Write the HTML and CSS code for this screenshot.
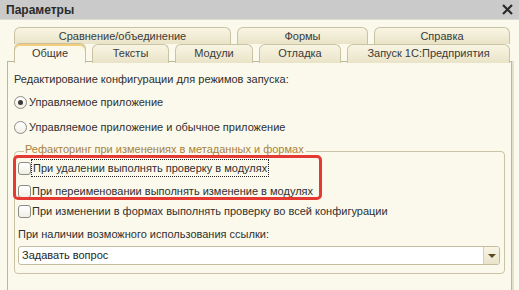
FILE: index.html
```html
<!DOCTYPE html>
<html lang="ru">
<head>
    <meta charset="UTF-8">
    <title>Параметры</title>
    <link rel="stylesheet" href="styles.css">
</head>
<body>
    <div class="titlebar">
        <span class="title">Параметры</span>
        <svg class="close" width="11" height="11" viewBox="0 0 11 11">
            <path d="M1 1 L10 10 M10 1 L1 10" stroke="#2b2b2b" stroke-width="2.2"/>
        </svg>
    </div>

    <!-- Tabs: two rows, the front row holds the active one -->
    <div class="tabs">
        <div class="tab-row back">
            <div class="tab">Сравнение/объединение</div>
            <div class="tab">Формы</div>
            <div class="tab">Справка</div>
        </div>
        <div class="tab-row front">
            <div class="tab active">Общие</div>
            <div class="tab">Тексты</div>
            <div class="tab">Модули</div>
            <div class="tab">Отладка</div>
            <div class="tab">Запуск 1С:Предприятия</div>
        </div>
    </div>

    <div class="panel">
        <div class="row caption">Редактирование конфигурации для режимов запуска:</div>
        <label class="row radio-row first">
            <span class="radio checked"></span>
            <span>Управляемое приложение</span>
        </label>
        <label class="row radio-row second">
            <span class="radio"></span>
            <span>Управляемое приложение и обычное приложение</span>
        </label>

        <div class="group">
            <div class="group-title">Рефакторинг при изменениях в метаданных и формах</div>
            <div class="highlight"></div>
            <label class="row check-row cb1">
                <span class="checkbox"></span>
                <span class="focused">При удалении выполнять проверку в модулях</span>
            </label>
            <label class="row check-row cb2">
                <span class="checkbox"></span>
                <span>При переименовании выполнять изменение в модулях</span>
            </label>
            <label class="row check-row cb3">
                <span class="checkbox"></span>
                <span>При изменении в формах выполнять проверку во всей конфигурации</span>
            </label>
            <div class="row ref-label">При наличии возможного использования ссылки:</div>
            <div class="combo">
                <span class="combo-value">Задавать вопрос</span>
                <span class="combo-button"><span class="arrow"></span></span>
            </div>
        </div>
    </div>
</body>
</html>
```

FILE: styles.css
```css
body {
    margin: 0;
    width: 519px;
    height: 290px;
    overflow: hidden;
    background: #fbf9ec;
    font-family: 'Liberation Sans', Arial, sans-serif;
    font-size: 11px;
    color: #2f2f2f;
}

/* Title bar */
.titlebar {
    height: 19px;
    background: #cacaca;
    border-bottom: 1px solid #dcdcd4;
    padding: 0 6px;
    display: flex;
    align-items: center;
    justify-content: space-between;
}
.title {
    font-size: 12px;
    font-weight: bold;
    color: #2a2a2a;
}

/* Tabs */
.tabs {
    padding: 7px 0 0 14px;
    margin-bottom: -1px;
}
.tab-row {
    display: grid;
    gap: 6px;
    height: 17px;
}
.tab-row.back {
    grid-template-columns: 217px 131px 136px;
}
.tab-row.front {
    grid-template-columns: 72px 77px 78px 82px 163px;
    height: 18px;
}
.tab {
    border: 1px solid #c9c3a4;
    border-bottom: none;
    border-radius: 6px 6px 0 0;
    background: linear-gradient(#f8f5e3, #e9e3c7);
    text-align: center;
    line-height: 16px;
    color: #3a3a3a;
}
.front .tab {
    line-height: 17px;
}
.tab.active {
    position: relative;
    margin-top: -1px;
    background: #fbf9ec;
    border-color: #c9c0a0;
    box-shadow: inset 0 2px 0 #f2cd7c;
    line-height: 19px;
}

/* Page panel */
.panel {
    margin-left: 7px;
    width: 491px;
    height: 220px;
    border: 1px solid #bcb69b;
    border-bottom: none;
    box-shadow: 2px 0 0 #e4e0cc;
    padding: 9px 6px 0 6px;
}
.row {
    display: flex;
    align-items: center;
    height: 16px;
    line-height: 16px;
    white-space: nowrap;
}
.radio-row.first { margin-top: 7px; }
.radio-row.second { margin-top: 9px; }

.radio {
    box-sizing: border-box;
    width: 13px;
    height: 13px;
    border: 1px solid #8c8c86;
    border-radius: 50%;
    background: linear-gradient(#ffffff, #f1efe4);
    margin-right: 2px;
    display: flex;
    align-items: center;
    justify-content: center;
}
.radio.checked::after {
    content: "";
    width: 5px;
    height: 5px;
    border-radius: 50%;
    background: #3a3a3a;
}

/* Group box */
.group {
    position: relative;
    margin-top: 16px;
    padding: 0 4px 8px 3px;
    border: 1px solid #c9c3a8;
    border-radius: 4px;
}
.group-title {
    display: table;
    margin: -11px 0 0 6px;
    padding: 0 2px 0 1px;
    line-height: 16px;
    background: #fbf9ec;
    color: #a8823f;
}
.highlight {
    position: absolute;
    left: -2px;
    top: 3px;
    width: 303px;
    height: 39px;
    border: 3px solid #e53a33;
    border-radius: 5px;
}
.checkbox {
    box-sizing: border-box;
    width: 13px;
    height: 13px;
    border: 1px solid #8c8c86;
    border-radius: 3px;
    background: linear-gradient(#ffffff, #f1efe4);
    margin-right: 1px;
}
.focused {
    outline: 1px dotted #222;
    outline-offset: 0;
    padding: 0 1px;
}
.cb1 { margin-top: 3px; }
.cb2 { margin-top: 7px; }
.cb3 { margin-top: 4px; }
.ref-label { margin-top: 7px; }

/* Combo box */
.combo {
    margin-top: 4px;
    height: 17px;
    border: 1px solid #c3bc9d;
    border-radius: 3px;
    background: #fff;
    display: flex;
    align-items: center;
    justify-content: space-between;
    color: #262626;
}
.combo-value {
    padding-left: 3px;
    line-height: 17px;
}
.combo-button {
    width: 15px;
    height: 17px;
    border-left: 1px solid #d4cfb6;
    border-radius: 0 2px 2px 0;
    background: linear-gradient(#f8f5e6, #e8e3c9);
    display: flex;
    align-items: center;
    justify-content: center;
}
.arrow {
    width: 0;
    height: 0;
    border-left: 4px solid transparent;
    border-right: 4px solid transparent;
    border-top: 4px solid #5b4a20;
}
```
